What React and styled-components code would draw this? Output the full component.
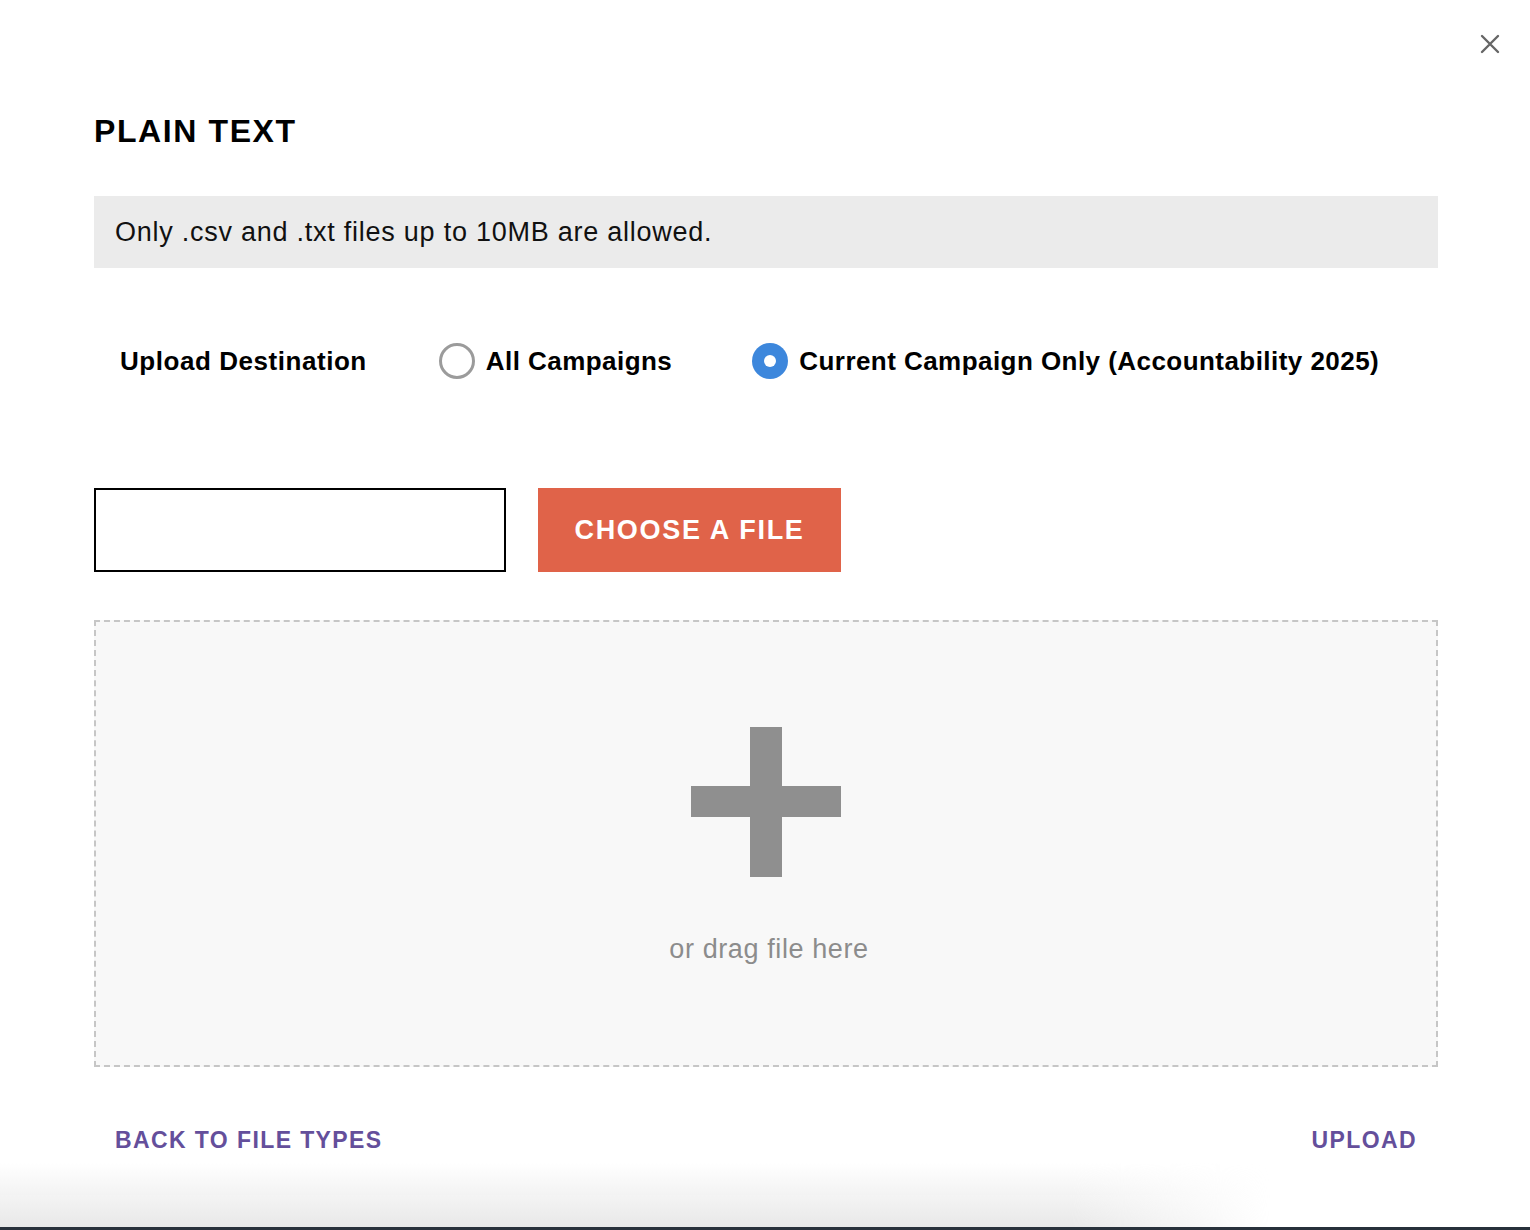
import React from "react";
import styled, { createGlobalStyle } from "styled-components";

const Global = createGlobalStyle`
  html, body { margin: 0; padding: 0; background: #ffffff; }
  body { font-family: "Liberation Sans", Arial, sans-serif; color: #111; }
  * { box-sizing: border-box; }
`;

const Page = styled.div`
  width: 1530px;
  height: 1230px;
  display: flex;
  flex-direction: column;
  overflow: hidden;
`;

const Modal = styled.div`
  position: relative;
  flex: 1;
  background: #fff;
  padding: 111px 92px 0 94px;
  display: flex;
  flex-direction: column;
`;

const Shade = styled.div`
  position: absolute;
  left: 0;
  right: 0;
  bottom: 0;
  height: 64px;
  background: linear-gradient(to bottom, rgba(232,232,232,0) 0%, #e8e8e8 100%);
  -webkit-mask-image: linear-gradient(to right, #000 0%, #000 70%, transparent 83%);
  mask-image: linear-gradient(to right, #000 0%, #000 70%, transparent 83%);
  pointer-events: none;
`;

const BottomBar = styled.div`
  height: 3px;
  background: #28313b;
`;

const CloseButton = styled.button`
  position: absolute;
  top: 30px;
  right: 26px;
  width: 28px;
  height: 28px;
  border: none;
  background: transparent;
  padding: 0;
  cursor: pointer;
  display: flex;
  align-items: center;
  justify-content: center;
`;

const Title = styled.h1`
  margin: 0;
  height: 40px;
  line-height: 40px;
  font-size: 32px;
  font-weight: 700;
  letter-spacing: 1.6px;
  color: #000;
`;

const InfoBar = styled.div`
  margin-top: 45px;
  height: 72px;
  background: #ebebeb;
  display: flex;
  align-items: center;
  padding-left: 21px;
  font-size: 27px;
  letter-spacing: 0.75px;
  color: #111;
`;

const RadioRow = styled.div`
  margin-top: 63px;
  height: 60px;
  display: flex;
  align-items: center;
  padding-left: 26px;
  white-space: nowrap;
`;

const GroupLabel = styled.span`
  flex-shrink: 0;
  font-size: 26px;
  font-weight: 700;
  letter-spacing: 0.55px;
  color: #000;
  margin-right: 72px;
`;

const Option = styled.label`
  flex-shrink: 0;
  display: flex;
  align-items: center;
  gap: 11px;
  margin-right: 80px;
  font-size: 26px;
  font-weight: 700;
  letter-spacing: 0.45px;
  color: #000;
  cursor: pointer;
  &:last-child { margin-right: 0; }
`;

const RadioCircle = styled.span`
  width: 36px;
  height: 36px;
  border-radius: 50%;
  flex-shrink: 0;
  display: flex;
  align-items: center;
  justify-content: center;
  border: ${(p) => (p.$checked ? "none" : "3px solid #9b9b9b")};
  background: ${(p) => (p.$checked ? "#3d87dc" : "#fff")};
  &::after {
    content: "";
    display: ${(p) => (p.$checked ? "block" : "none")};
    width: 12px;
    height: 12px;
    border-radius: 50%;
    background: #fff;
  }
`;

const FileRow = styled.div`
  margin-top: 97px;
  height: 84px;
  display: flex;
  gap: 32px;
`;

const FileName = styled.div`
  width: 412px;
  height: 84px;
  border: 2px solid #000;
  background: #fff;
`;

const ChooseButton = styled.button`
  width: 303px;
  height: 84px;
  border: none;
  background: #e06349;
  color: #fff;
  font-family: "Liberation Sans", Arial, sans-serif;
  font-size: 27px;
  font-weight: 700;
  letter-spacing: 1.7px;
  cursor: pointer;
`;

const DropZone = styled.div`
  margin-top: 48px;
  height: 447px;
  border: 2px dashed #c6c6c6;
  background: #f8f8f8;
  display: flex;
  flex-direction: column;
  align-items: center;
  padding-top: 105px;
`;

const PlusIcon = styled.svg`
  display: block;
`;

const DropText = styled.div`
  margin-top: 57px;
  margin-left: 6px;
  font-size: 27px;
  letter-spacing: 0.6px;
  color: #8c8c8c;
`;

const Footer = styled.div`
  margin-top: 60px;
  display: flex;
  justify-content: space-between;
  padding: 0 21px;
`;

const FooterLink = styled.a`
  font-size: 23px;
  font-weight: 700;
  letter-spacing: 1.4px;
  color: #644f9b;
  text-decoration: none;
  cursor: pointer;
`;

export default function App() {
  return (
    <Page>
      <Global />
      <Modal>
        <CloseButton aria-label="Close">
          <svg width="22" height="22" viewBox="0 0 22 22">
            <path d="M3 3 L19 19 M19 3 L3 19" stroke="#666" strokeWidth="2.4" strokeLinecap="round" />
          </svg>
        </CloseButton>
        <Title>PLAIN TEXT</Title>
        <InfoBar>Only .csv and .txt files up to 10MB are allowed.</InfoBar>
        <RadioRow>
          <GroupLabel>Upload Destination</GroupLabel>
          <Option>
            <RadioCircle />
            All Campaigns
          </Option>
          <Option>
            <RadioCircle $checked />
            Current Campaign Only (Accountability 2025)
          </Option>
        </RadioRow>
        <FileRow>
          <FileName />
          <ChooseButton>CHOOSE A FILE</ChooseButton>
        </FileRow>
        <DropZone>
          <PlusIcon width="150" height="150" viewBox="0 0 150 150">
            <rect x="59" y="0" width="32" height="150" fill="#8f8f8f" />
            <rect x="0" y="59" width="150" height="31" fill="#8f8f8f" />
          </PlusIcon>
          <DropText>or drag file here</DropText>
        </DropZone>
        <Footer>
          <FooterLink>BACK TO FILE TYPES</FooterLink>
          <FooterLink>UPLOAD</FooterLink>
        </Footer>
        <Shade />
      </Modal>
      <BottomBar />
    </Page>
  );
}
